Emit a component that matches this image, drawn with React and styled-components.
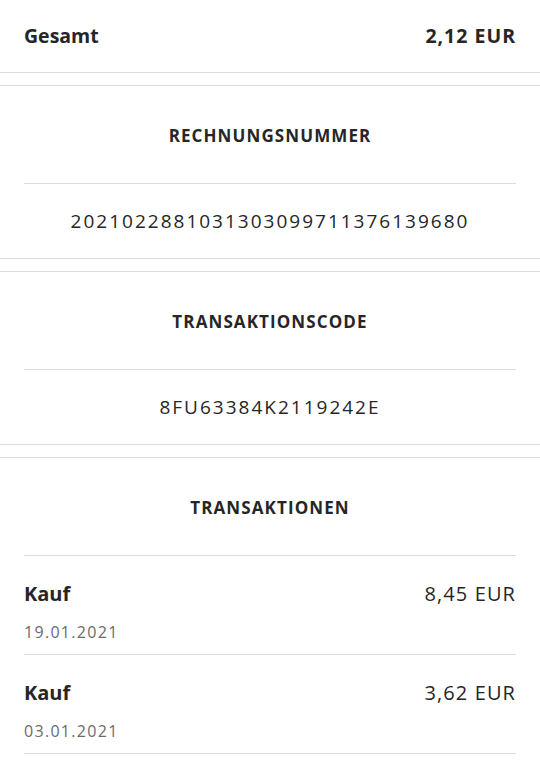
import React from 'react';
import styled, { createGlobalStyle } from 'styled-components';

const GlobalStyle = createGlobalStyle`
  body {
    margin: 0;
    background: #ffffff;
    font-family: 'Open Sans', 'Noto Sans', sans-serif;
    color: #262626;
  }
`;

const line = '#dcdcdc';

const Page = styled.div`
  display: flex;
  flex-direction: column;
  gap: 12px;
`;

const Card = styled.section`
  background: #fff;
  border-top: ${(props) => (props.first ? 'none' : `1px solid ${line}`)};
  border-bottom: ${(props) => (props.last ? 'none' : `1px solid ${line}`)};
  padding: 0 24px;
`;

const TotalRow = styled.div`
  height: 72px;
  display: flex;
  align-items: center;
  justify-content: space-between;
  font-size: 19.5px;
  font-weight: 700;
  padding-bottom: 1px;
  box-sizing: border-box;
`;

const Amount = styled.span`
  letter-spacing: ${(props) => (props.wide ? '1px' : '0')};
`;

const Heading = styled.h2`
  margin: 0;
  height: 98px;
  display: flex;
  align-items: center;
  justify-content: center;
  font-size: 17px;
  font-weight: 700;
  letter-spacing: 1.1px;
  border-bottom: 1px solid ${line};
  padding-top: 2px;
  box-sizing: border-box;
`;

const Value = styled.div`
  height: 74px;
  display: flex;
  align-items: center;
  justify-content: center;
  font-size: 19px;
  letter-spacing: 2px;
  box-sizing: border-box;
`;

const TxRow = styled.div`
  height: 99px;
  display: grid;
  grid-template-columns: 1fr auto;
  align-content: start;
  row-gap: 13px;
  padding-top: 24px;
  border-bottom: 1px solid ${line};
  box-sizing: border-box;
  line-height: 28px;
`;

const TxType = styled.span`
  font-size: 20px;
  font-weight: 700;
`;

const TxAmount = styled.span`
  font-size: 20px;
  letter-spacing: 1.1px;
`;

const TxDate = styled.span`
  grid-column: 1 / -1;
  font-size: 16px;
  line-height: 22px;
  color: #6b6b6b;
  letter-spacing: 1.3px;
`;

const transactions = [
  { type: 'Kauf', amount: '8,45 EUR', date: '19.01.2021' },
  { type: 'Kauf', amount: '3,62 EUR', date: '03.01.2021' },
];

export default function App() {
  return (
    <>
      <GlobalStyle />
      <Page>
        <Card first>
          <TotalRow>
            <Amount>Gesamt</Amount>
            <Amount wide>2,12 EUR</Amount>
          </TotalRow>
        </Card>
        <Card>
          <Heading>RECHNUNGSNUMMER</Heading>
          <Value>2021022881031303099711376139680</Value>
        </Card>
        <Card>
          <Heading>TRANSAKTIONSCODE</Heading>
          <Value>8FU63384K2119242E</Value>
        </Card>
        <Card last>
          <Heading>TRANSAKTIONEN</Heading>
          {transactions.map((t) => (
            <TxRow key={t.date}>
              <TxType>{t.type}</TxType>
              <TxAmount>{t.amount}</TxAmount>
              <TxDate>{t.date}</TxDate>
            </TxRow>
          ))}
        </Card>
      </Page>
    </>
  );
}
